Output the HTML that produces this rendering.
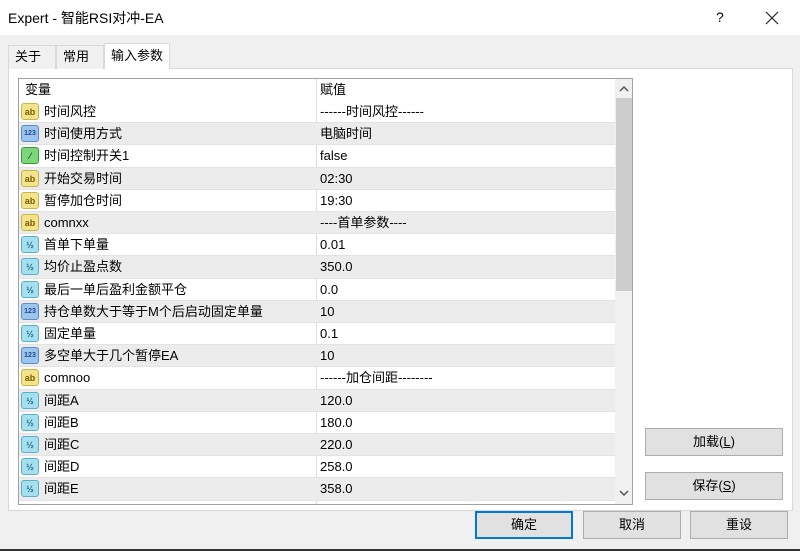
<!DOCTYPE html>
<html><head><meta charset="utf-8"><style>
*{margin:0;padding:0;box-sizing:border-box}
body{width:800px;height:551px;background:#f0f0f0;font-family:"Liberation Sans","Noto Sans CJK SC",sans-serif;font-size:13px;color:#000;position:relative;overflow:hidden}
.a{position:absolute}
.title{left:0;top:0;width:800px;height:35px;background:#fff}
.tab{top:45px;height:24px;border:1px solid #d9d9d9;border-bottom:none;background:#f0f0f0;padding-left:6px;font-size:13px;line-height:22px}
.page{left:8px;top:68px;width:785px;height:443px;background:#fff;border:1px solid #d9d9d9}
.list{left:18px;top:78px;width:615px;height:427px;border:1px solid #a0a0a0;background:#fff;overflow:hidden}
.row{position:absolute;left:0;width:596px;height:22.2px;border-bottom:1px solid #e3e3e3}
.row.g{background:#ececec}
.row span{position:absolute;top:0;height:21px;line-height:21px;white-space:nowrap}
.n{left:25px}.v{left:301px}
.div{position:absolute;left:297px;top:0;width:1px;height:427px;background:#dcdcdc}
.ic{position:absolute;left:2px;top:2px;width:18px;height:17px;border-radius:3px;font-size:9px;font-weight:bold;text-align:center;line-height:16px;font-family:"Liberation Sans",sans-serif}
.ab{background:#f3e38a;border:1px solid #c8b44a;color:#7a5a00}
.n3{background:#9cc4ec;border:1px solid #5a8cc8;color:#1b4b9a;font-size:7px}
.bo{background:#7ed67a;border:1px solid #3a9a3a;color:#155a15}
.db{background:#a6e0ee;border:1px solid #5ab0c8;color:#1a6a8a}
.btn{position:absolute;height:28px;border:1px solid #adadad;background:#e1e1e1;text-align:center;line-height:26px;font-size:13px}
</style></head><body>
<div class="a title"></div>
<div class="a" style="left:8px;top:9px;font-size:14px;line-height:18px">Expert - 智能RSI对冲-EA</div>
<div class="a" style="left:716px;top:9px;font-size:14px">?</div>
<svg class="a" style="left:765px;top:11px" width="14" height="14"><path d="M1 1L13 13M13 1L1 13" stroke="#222" stroke-width="1.2"/></svg>
<div class="a page"></div>
<div class="a tab" style="left:8px;width:48px">关于</div>
<div class="a tab" style="left:56px;width:48px">常用</div>
<div class="a tab" style="left:104px;top:43px;height:26px;width:66px;background:#fff;line-height:24px">输入参数</div>
<div class="a list">
<div class="row" style="top:0;border:none"><span style="left:6px">变量</span><span class="v">赋值</span></div>
<div class="div"></div>
<div id="rows"></div>
<div style="position:absolute;left:596px;top:0;width:18px;height:427px;background:#f0f0f0"></div>
<svg style="position:absolute;left:598px;top:6px" width="14" height="8"><path d="M3 6L7 2L11 6" stroke="#555" fill="none" stroke-width="1.5"/></svg>
<div style="position:absolute;left:597px;top:19px;width:16px;height:193px;background:#cdcdcd"></div>
<svg style="position:absolute;left:598px;top:410px" width="14" height="8"><path d="M3 2L7 6L11 2" stroke="#555" fill="none" stroke-width="1.5"/></svg>
</div>
<div class="btn" style="left:645px;top:428px;width:138px">加载(<u>L</u>)</div>
<div class="btn" style="left:645px;top:472px;width:138px">保存(<u>S</u>)</div>
<div class="btn" style="left:475px;top:511px;width:98px;border:2px solid #0078d7;line-height:24px">确定</div>
<div class="btn" style="left:583px;top:511px;width:98px">取消</div>
<div class="btn" style="left:690px;top:511px;width:98px">重设</div>
<div class="a" style="left:0;top:549px;width:800px;height:2px;background:#333"></div>
<script>
var d=[["ab","时间风控","------时间风控------"],["n3","时间使用方式","电脑时间"],["bo","时间控制开关1","false"],["ab","开始交易时间","02:30"],["ab","暂停加仓时间","19:30"],["ab","comnxx","----首单参数----"],["db","首单下单量","0.01"],["db","均价止盈点数","350.0"],["db","最后一单后盈利金额平仓","0.0"],["n3","持仓单数大于等于M个后启动固定单量","10"],["db","固定单量","0.1"],["n3","多空单大于几个暂停EA","10"],["ab","comnoo","------加仓间距--------"],["db","间距A","120.0"],["db","间距B","180.0"],["db","间距C","220.0"],["db","间距D","258.0"],["db","间距E","358.0"]];
var t={ab:"ab",n3:"123",bo:"⁄",db:"½"};var h="";
d.forEach(function(r,i){h+='<div class="row'+(i%2?' g':'')+'" style="top:'+(22+i*22.2)+'px"><div class="ic '+r[0]+'">'+t[r[0]]+'</div><span class="n">'+r[1]+'</span><span class="v">'+r[2]+'</span></div>';});
document.getElementById("rows").innerHTML=h;
</script>
</body></html>
